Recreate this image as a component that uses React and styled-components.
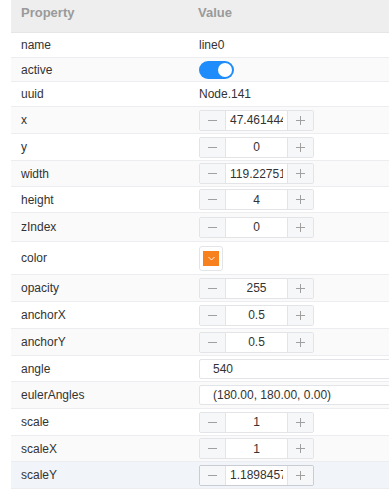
import React from 'react';
import styled, { createGlobalStyle } from 'styled-components';

const Global = createGlobalStyle`
  html, body { margin: 0; padding: 0; background: #fff; overflow: hidden; }
  body { font-family: "Liberation Sans", Arial, sans-serif; font-size: 12px; color: #333; }
`;

const Page = styled.div`
  margin-left: 11px;
  width: 378px;
  overflow: hidden;
`;

const Head = styled.div`
  display: grid;
  grid-template-columns: 178px 1fr;
  height: 33px;
  background: #eeeeee;
  border-bottom: 1px solid #e6e6e6;
  box-sizing: border-box;
  font-size: 13px;
  font-weight: bold;
  color: #9a9a9a;
  line-height: 18px;
  padding-top: 4px;
`;

const HeadCell = styled.div`
  padding-left: ${p => p.$pad}px;
`;

const Row = styled.div`
  display: grid;
  grid-template-columns: 178px 1fr;
  align-items: center;
  height: ${p => p.$h}px;
  box-sizing: border-box;
  border-bottom: 1px solid #ebedf0;
  background: ${p => (p.$hover ? '#f1f4f8' : p.$odd ? '#fafafa' : '#fff')};
`;

const Name = styled.div`
  padding-left: 10px;
  color: #333;
`;

const Value = styled.div`
  padding-left: 10px;
  display: flex;
  align-items: center;
  min-width: 0;
  overflow: hidden;
`;

const Toggle = styled.div`
  width: 35px;
  height: 18px;
  border-radius: 9px;
  background: #1e8cfa;
  position: relative;
  &::after {
    content: '';
    position: absolute;
    right: 2px;
    top: 2px;
    width: 14px;
    height: 14px;
    border-radius: 50%;
    background: #fff;
  }
`;

const Stepper = styled.div`
  display: flex;
  width: 115px;
  height: 21px;
  box-sizing: border-box;
  border: 1px solid ${p => (p.$focus ? '#c9ccd2' : '#e2e4e8')};
  border-radius: 2px;
  overflow: hidden;
`;

const StepBtn = styled.div`
  width: 25px;
  flex: none;
  display: flex;
  align-items: center;
  justify-content: center;
  background: #f6f7f9;
  ${p => (p.$side === 'left' ? 'border-right' : 'border-left')}: 1px solid #e2e4e8;
`;

const NumInput = styled.input`
  flex: 1;
  min-width: 0;
  border: none;
  outline: none;
  padding: 0 4px;
  font: inherit;
  color: #333;
  text-align: center;
  background: #fff;
`;

const TextInput = styled.input`
  width: 240px;
  flex: none;
  height: 20px;
  box-sizing: border-box;
  border: 1px solid #e2e4e8;
  border-radius: 2px;
  padding: 0 13px;
  font: inherit;
  color: #333;
  outline: none;
  background: #fff;
`;

const Swatch = styled.div`
  width: 24px;
  height: 25px;
  box-sizing: border-box;
  border: 1px solid #e2e4e8;
  border-radius: 3px;
  display: flex;
  align-items: center;
  justify-content: center;
  background: #fff;
`;

const Chip = styled.div`
  width: 16px;
  height: 15px;
  background: ${p => p.$color};
  display: flex;
  align-items: center;
  justify-content: center;
`;

const Minus = () => (
  <svg width="9" height="9" viewBox="0 0 9 9">
    <line x1="0" y1="4.5" x2="9" y2="4.5" stroke="#a0a0a0" strokeWidth="1" />
  </svg>
);

const Plus = () => (
  <svg width="9" height="9" viewBox="0 0 9 9">
    <line x1="0" y1="4.5" x2="9" y2="4.5" stroke="#a0a0a0" strokeWidth="1" />
    <line x1="4.5" y1="0" x2="4.5" y2="9" stroke="#a0a0a0" strokeWidth="1" />
  </svg>
);

const Chevron = () => (
  <svg width="7" height="5" viewBox="0 0 7 5">
    <polyline points="0.5,1 3.5,4 6.5,1" fill="none" stroke="#fff" strokeWidth="0.9" />
  </svg>
);

const NumberField = ({ value, focus }) => (
  <Stepper $focus={focus}>
    <StepBtn $side="left"><Minus /></StepBtn>
    <NumInput readOnly value={value} />
    <StepBtn $side="right"><Plus /></StepBtn>
  </Stepper>
);

const rows = [
  { name: 'name', type: 'text', value: 'line0', h: 25 },
  { name: 'active', type: 'toggle', h: 24 },
  { name: 'uuid', type: 'text', value: 'Node.141', h: 25 },
  { name: 'x', type: 'num', value: '47.46144458', h: 27 },
  { name: 'y', type: 'num', value: '0', h: 27 },
  { name: 'width', type: 'num', value: '119.2275146', h: 26 },
  { name: 'height', type: 'num', value: '4', h: 26 },
  { name: 'zIndex', type: 'num', value: '0', h: 29 },
  { name: 'color', type: 'color', value: '#f7811f', h: 33 },
  { name: 'opacity', type: 'num', value: '255', h: 27 },
  { name: 'anchorX', type: 'num', value: '0.5', h: 27 },
  { name: 'anchorY', type: 'num', value: '0.5', h: 27 },
  { name: 'angle', type: 'input', value: '540', h: 26 },
  { name: 'eulerAngles', type: 'input', value: '(180.00, 180.00, 0.00)', h: 27 },
  { name: 'scale', type: 'num', value: '1', h: 27 },
  { name: 'scaleX', type: 'num', value: '1', h: 26 },
  { name: 'scaleY', type: 'num', value: '1.18984572', h: 27, hover: true },
];

function renderValue(r) {
  switch (r.type) {
    case 'toggle':
      return <Toggle />;
    case 'num':
      return <NumberField value={r.value} focus={r.hover} />;
    case 'input':
      return <TextInput readOnly value={r.value} />;
    case 'color':
      return (
        <Swatch>
          <Chip $color={r.value}><Chevron /></Chip>
        </Swatch>
      );
    default:
      return r.value;
  }
}

export default function App() {
  return (
    <Page>
      <Global />
      <Head>
        <HeadCell $pad={10}>Property</HeadCell>
        <HeadCell $pad={9}>Value</HeadCell>
      </Head>
      {rows.map((r, i) => (
        <Row key={r.name} $h={r.h} $odd={i % 2 === 1} $hover={r.hover}>
          <Name>{r.name}</Name>
          <Value>{renderValue(r)}</Value>
        </Row>
      ))}
    </Page>
  );
}
